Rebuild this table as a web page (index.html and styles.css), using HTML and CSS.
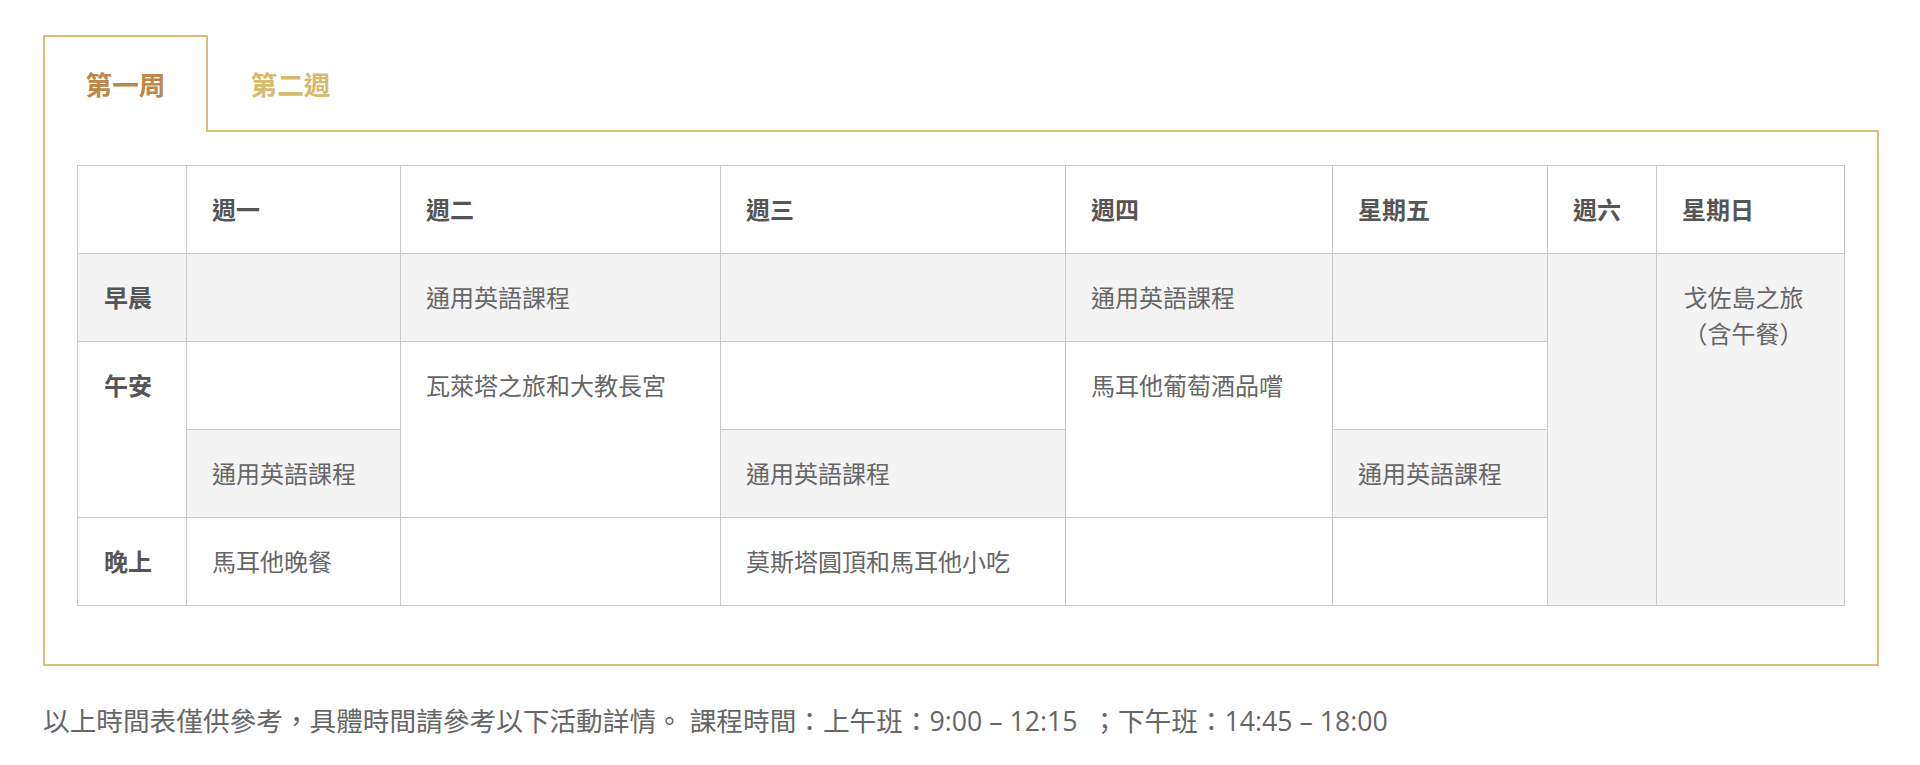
FILE: index.html
```html
<!DOCTYPE html>
<html lang="zh-Hant">
<head>
<meta charset="utf-8">
<title>課程時間表</title>
<link rel="stylesheet" href="styles.css">
</head>
<body>
<div class="page">
  <div class="tabs">
    <div class="tab tab-active">第一周</div>
    <div class="tab">第二週</div>
  </div>
  <div class="panel">
    <table class="schedule">
      <colgroup>
        <col class="c-label">
        <col class="c-mon">
        <col class="c-tue">
        <col class="c-wed">
        <col class="c-thu">
        <col class="c-fri">
        <col class="c-sat">
        <col class="c-sun">
      </colgroup>
      <thead>
        <tr>
          <th></th>
          <th>週一</th>
          <th>週二</th>
          <th>週三</th>
          <th>週四</th>
          <th>星期五</th>
          <th>週六</th>
          <th>星期日</th>
        </tr>
      </thead>
      <tbody>
        <tr class="shade-row">
          <th>早晨</th>
          <td></td>
          <td>通用英語課程</td>
          <td></td>
          <td>通用英語課程</td>
          <td></td>
          <td rowspan="4" class="shade"></td>
          <td rowspan="4" class="shade centered">戈佐島之旅<br>（含午餐）</td>
        </tr>
        <tr>
          <th rowspan="2">午安</th>
          <td></td>
          <td rowspan="2">瓦萊塔之旅和大教長宮</td>
          <td></td>
          <td rowspan="2">馬耳他葡萄酒品嚐</td>
          <td></td>
        </tr>
        <tr>
          <td class="shade">通用英語課程</td>
          <td class="shade">通用英語課程</td>
          <td class="shade">通用英語課程</td>
        </tr>
        <tr>
          <th>晚上</th>
          <td>馬耳他晚餐</td>
          <td></td>
          <td>莫斯塔圓頂和馬耳他小吃</td>
          <td></td>
          <td></td>
        </tr>
      </tbody>
    </table>
  </div>
  <p class="note">以上時間表僅供參考，具體時間請參考以下活動詳情。 課程時間：上午班：9:00 – 12:15 &nbsp;；下午班：14:45 – 18:00</p>
</div>
</body>
</html>
```

FILE: styles.css
```css
html, body {
  margin: 0;
  padding: 0;
  background: #ffffff;
}

body {
  font-family: "Open Sans", "Noto Sans CJK TC", sans-serif;
  color: #666666;
}

.page {
  padding: 35px 41px 0 43px;
}

.tabs {
  display: flex;
  position: relative;
  z-index: 1;
  margin-bottom: -2px;
}

.tab {
  box-sizing: border-box;
  width: 165px;
  height: 97px;
  display: flex;
  align-items: center;
  justify-content: center;
  font-size: 26.67px;
  font-weight: 700;
  color: #d6bb6e;
  border: 2px solid transparent;
  border-bottom: none;
  padding-bottom: 2px;
}

.tab-active {
  background: #ffffff;
  border-color: #d8c07a;
  color: #bc8748;
}

.panel {
  border: 2px solid #d8c07a;
  padding: 33px 32px 58px 32px;
}

.schedule {
  width: 1767px;
  table-layout: fixed;
  border-collapse: collapse;
  font-size: 24px;
  line-height: 36px;
  color: #666666;
}

.schedule tr {
  height: 88px;
}

.c-label { width: 109px; }
.c-mon { width: 214px; }
.c-tue { width: 320px; }
.c-wed { width: 345px; }
.c-thu { width: 267px; }
.c-fri { width: 215px; }
.c-sat { width: 109px; }
.c-sun { width: 188px; }

.schedule th,
.schedule td {
  border: 1px solid #c9c9c9;
  padding: 26px 25px 25px 25px;
  text-align: left;
  vertical-align: top;
}

.schedule th {
  font-weight: 700;
  color: #555555;
}

.schedule tbody th {
  padding-left: 26px;
}

.shade-row th,
.shade-row td,
.schedule .shade {
  background: #f4f4f4;
}

.schedule .centered {
  text-align: center;
  padding-left: 20px;
  padding-right: 34px;
}

.note {
  margin: 35px 0 0 0;
  font-size: 26.67px;
  line-height: 40px;
  color: #666666;
}
```
